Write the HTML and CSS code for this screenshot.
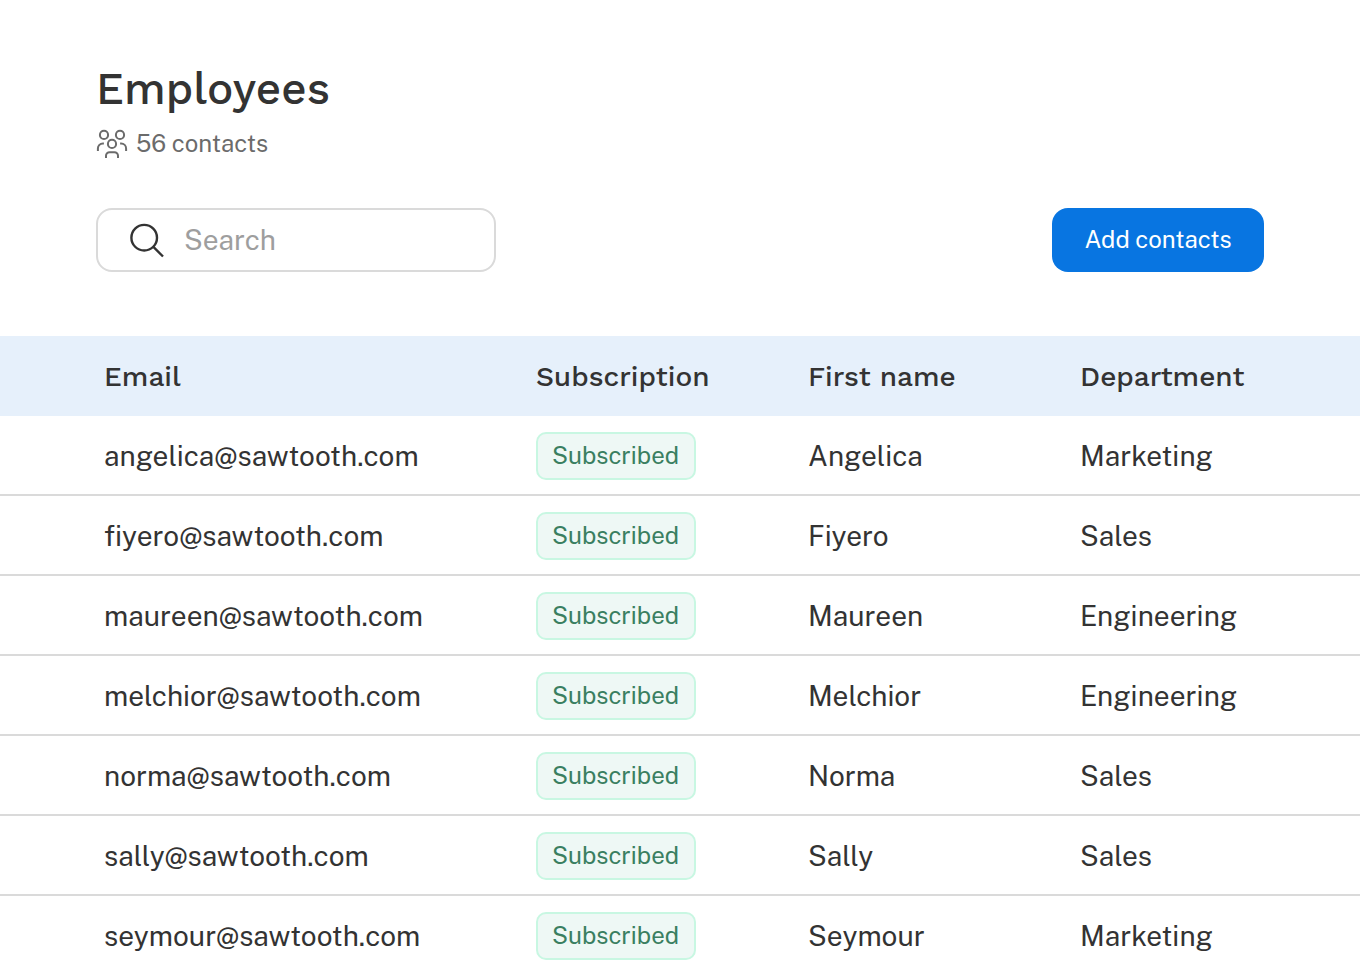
FILE: index.html
```html
<!DOCTYPE html>
<html lang="en">

<head>
    <meta charset="UTF-8">
    <meta name="viewport" content="width=device-width, initial-scale=1.0">
    <title>Employees</title>
    <link rel="stylesheet" href="styles.css">
</head>

<body>
    <header class="page-header">
        <h1>Employees</h1>
        <div class="contact-count">
            <svg class="icon-people" viewBox="0 0 32 32" width="32" height="32">
                <circle cx="8" cy="6.9" r="4.1" />
                <circle cx="24" cy="6.9" r="4.1" />
                <circle cx="16" cy="15.9" r="4.1" />
                <path d="M1.9 23v-2.6a5 5 0 0 1 5-5h1" />
                <path d="M30.1 23v-2.6a5 5 0 0 0-5-5h-1" />
                <path d="M10 30v-2.2a3.6 3.6 0 0 1 3.6-3.6h4.8a3.6 3.6 0 0 1 3.6 3.6v2.2" />
            </svg>
            <span>56 contacts</span>
        </div>

        <div class="toolbar">
            <label class="search-box">
                <svg class="icon-search" viewBox="0 0 36 36" width="36" height="36">
                    <circle cx="16.2" cy="15.7" r="12.8" />
                    <path d="M25.4 24.9l9.6 9.6" />
                </svg>
                <input type="text" placeholder="Search">
            </label>
            <button type="button" class="btn-add">Add contacts</button>
        </div>
    </header>

    <table class="contacts">
        <thead>
            <tr>
                <th class="col-email">Email</th>
                <th class="col-subscription">Subscription</th>
                <th class="col-name">First name</th>
                <th class="col-department">Department</th>
            </tr>
        </thead>
        <tbody>
            <tr>
                <td>angelica@sawtooth.com</td>
                <td><span class="badge">Subscribed</span></td>
                <td>Angelica</td>
                <td>Marketing</td>
            </tr>
            <tr>
                <td>fiyero@sawtooth.com</td>
                <td><span class="badge">Subscribed</span></td>
                <td>Fiyero</td>
                <td>Sales</td>
            </tr>
            <tr>
                <td>maureen@sawtooth.com</td>
                <td><span class="badge">Subscribed</span></td>
                <td>Maureen</td>
                <td>Engineering</td>
            </tr>
            <tr>
                <td>melchior@sawtooth.com</td>
                <td><span class="badge">Subscribed</span></td>
                <td>Melchior</td>
                <td>Engineering</td>
            </tr>
            <tr>
                <td>norma@sawtooth.com</td>
                <td><span class="badge">Subscribed</span></td>
                <td>Norma</td>
                <td>Sales</td>
            </tr>
            <tr>
                <td>sally@sawtooth.com</td>
                <td><span class="badge">Subscribed</span></td>
                <td>Sally</td>
                <td>Sales</td>
            </tr>
            <tr>
                <td>seymour@sawtooth.com</td>
                <td><span class="badge">Subscribed</span></td>
                <td>Seymour</td>
                <td>Marketing</td>
            </tr>
        </tbody>
    </table>
</body>

</html>
```
FILE: styles.css
```css
* {
    box-sizing: border-box;
    margin: 0;
    padding: 0;
    font-family: 'Public Sans', Inter, sans-serif;
}

body {
    background-color: #fff;
    color: #333;
    height: 100vh;
    overflow: hidden;
}

.page-header {
    height: 336px;
    padding: 64px 96px;
}

h1 {
    font-family: 'Work Sans', Inter, sans-serif;
    font-size: 44px;
    font-weight: 500;
    line-height: 50px;
}

.contact-count {
    display: flex;
    align-items: center;
    gap: 8px;
    height: 32px;
    margin-top: 14px;
    color: #6b6b6b;
    font-size: 24px;
}

.contact-count span {
    padding-bottom: 2px;
}

.icon-people,
.icon-search {
    flex: none;
    fill: none;
    stroke: currentColor;
    stroke-width: 2;
}

.icon-search {
    stroke-width: 2.4;
}

.toolbar {
    display: flex;
    justify-content: space-between;
    margin-top: 48px;
}

.search-box {
    display: flex;
    align-items: center;
    gap: 20px;
    width: 400px;
    height: 64px;
    padding: 0 30px;
    border: 2px solid #dadada;
    border-radius: 16px;
}

.search-box input {
    width: 280px;
    padding-bottom: 2px;
    border: none;
    outline: none;
    background: none;
    color: #333;
    font-size: 28px;
}

.search-box input::placeholder {
    color: #9e9e9e;
}

.btn-add {
    width: 212px;
    height: 64px;
    padding-bottom: 2px;
    border: none;
    border-radius: 16px;
    background-color: #0875e1;
    color: white;
    font-size: 24px;
    cursor: pointer;
}

.contacts {
    width: 100%;
    table-layout: fixed;
    border-collapse: separate;
    border-spacing: 0;
    text-align: left;
}

.col-email {
    width: 536px;
}

.col-subscription,
.col-name {
    width: 272px;
}

th {
    height: 80px;
    background-color: #e6f0fb;
    font-family: 'Work Sans', Inter, sans-serif;
    font-size: 28px;
    font-weight: 500;
}

td {
    height: 80px;
    border-bottom: 2px solid #dadada;
    font-size: 28px;
}

tr:last-child td {
    border-bottom-color: transparent;
}

th:first-child,
td:first-child {
    padding-left: 104px;
}

.badge {
    display: flex;
    align-items: center;
    justify-content: center;
    width: 160px;
    height: 48px;
    margin-top: 2px;
    padding: 0 1px 2px 0;
    border: 2px solid #c8f7e2;
    border-radius: 10px;
    background-color: #eef8f5;
    color: #3a7f61;
    font-size: 24px;
}
```
